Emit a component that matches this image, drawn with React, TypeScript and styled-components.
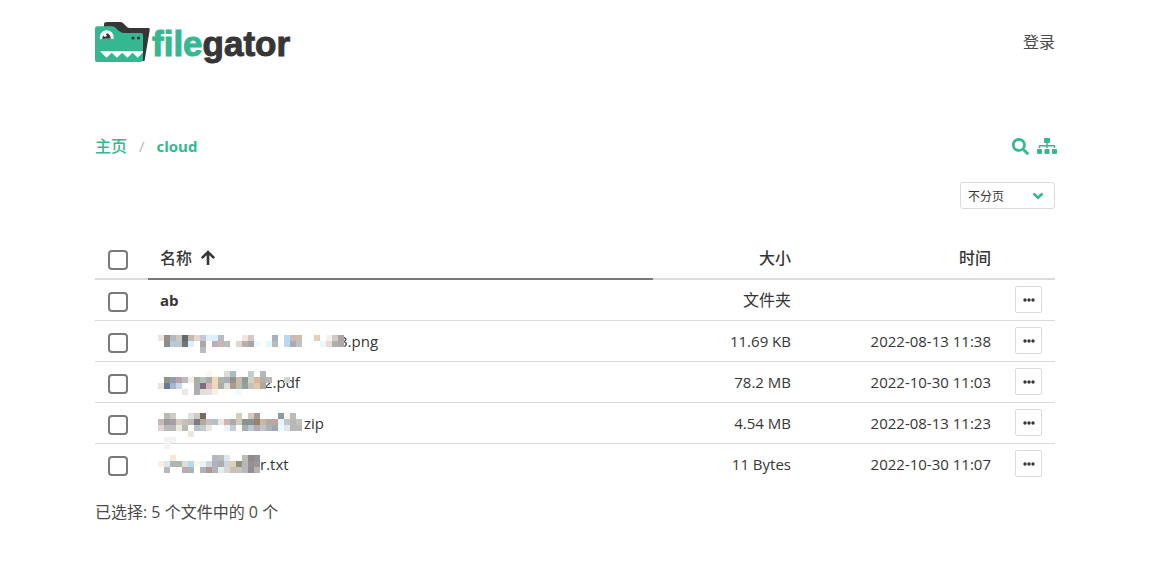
import React from 'react';
import styled, { createGlobalStyle } from 'styled-components';
import { FaSearch, FaSitemap } from 'react-icons/fa';

const GREEN = '#34b891';

const GlobalStyle = createGlobalStyle`
  *, *::before, *::after { box-sizing: border-box; }
  body {
    margin: 0;
    padding-right: 1px;
    background: #fff;
    color: #4a4a4a;
    font-family: 'Open Sans', 'Noto Sans CJK SC', sans-serif;
    font-size: 16px;
    line-height: 24px;
  }
  a { color: inherit; text-decoration: none; }
`;

const Container = styled.div`
  max-width: 960px;
  margin: 0 auto;
  padding-bottom: 64px;
`;

const Navbar = styled.nav`
  display: flex;
  align-items: center;
  justify-content: space-between;
  padding-top: 20px;
`;

const LogoLink = styled.a`
  display: flex;
  height: 44px;
`;

const Toolbar = styled.div`
  display: flex;
  align-items: center;
  justify-content: space-between;
  margin-top: 70px;
  color: ${GREEN};
`;

const Breadcrumb = styled.ol`
  display: flex;
  margin: 0;
  padding: 0;
  list-style: none;
`;

const Crumb = styled.li<{ $latin?: boolean }>`
  font-size: ${(p) => (p.$latin ? 15 : 16)}px;
  font-weight: ${(p) => (p.$latin ? 700 : 500)};
  &:not(:first-child)::before {
    content: '/';
    padding: 0 12px;
    color: #b5b5b5;
    font-weight: 400;
  }
`;

const Actions = styled.div`
  display: flex;
  align-items: center;
  gap: 8px;
  margin-right: -2px;
`;

const IconButton = styled.button`
  display: flex;
  padding: 0;
  border: 0;
  background: none;
  color: inherit;
  cursor: pointer;
`;

const PaginationBar = styled.div`
  display: flex;
  justify-content: flex-end;
  margin-top: 24px;
`;

const SelectWrap = styled.label`
  display: grid;
  align-items: center;
  > * { grid-area: 1 / 1; }
  svg {
    justify-self: end;
    margin-right: 11px;
    pointer-events: none;
  }
`;

const Select = styled.select`
  appearance: none;
  width: 95px;
  height: 27px;
  padding: 1px 24px 0 7px;
  border: 1px solid #dbdbdb;
  border-radius: 3px;
  background: #fff;
  color: #363636;
  font: 12px 'Open Sans', 'Noto Sans CJK SC', sans-serif;
`;

const Table = styled.table`
  width: 100%;
  margin-top: 29px;
  border-collapse: separate;
  border-spacing: 0;
  table-layout: fixed;
  color: #363636;
`;

const Col = styled.col<{ $w?: number }>`
  width: ${(p) => (p.$w ? `${p.$w}px` : 'auto')};
`;

const Th = styled.th<{ $sorted?: boolean; $right?: boolean }>`
  height: 42px;
  padding: 0 12px;
  border-bottom: 2px solid ${(p) => (p.$sorted ? '#7a7a7a' : '#dbdbdb')};
  text-align: ${(p) => (p.$right ? 'right' : 'left')};
  font-weight: 500;
  vertical-align: middle;
`;

const SortLabel = styled.span`
  display: flex;
  align-items: center;
  gap: 8px;
`;

const Td = styled.td<{ $right?: boolean; $cjk?: boolean }>`
  height: 41px;
  padding: 0 12px;
  border-bottom: 1px solid #dbdbdb;
  text-align: ${(p) => (p.$right ? 'right' : 'left')};
  font-size: ${(p) => (p.$cjk ? 16 : 15)}px;
  white-space: nowrap;
  vertical-align: middle;
  tr:last-child > & { border-bottom-color: transparent; }
`;

const CheckTd = styled(Td)`
  padding-left: 13px;
`;

const ActionTd = styled(Td)`
  padding-top: 6px;
  vertical-align: top;
`;

const CheckTh = styled(Th)`
  padding-left: 13px;
`;

const Checkbox = styled.input`
  appearance: none;
  display: block;
  width: 20px;
  height: 20px;
  margin: 4px 0 0;
  border: 2px solid #7a7a7a;
  border-radius: 4px;
  background: #fff;
  &:checked { background: ${GREEN}; border-color: ${GREEN}; }
`;

const MoreButton = styled.button`
  display: flex;
  align-items: center;
  justify-content: center;
  width: 27px;
  height: 27px;
  padding: 0;
  border: 1px solid #dbdbdb;
  border-radius: 2px;
  background: #fff;
  cursor: pointer;
`;

const FileLink = styled.a<{ $folder?: boolean }>`
  display: flex;
  align-items: center;
  font-weight: ${(p) => (p.$folder ? 700 : 400)};
`;

const MosaicSvg = styled.svg`
  flex: none;
  position: relative;
  z-index: 1;
  height: 24px;
  margin-left: -2px;
  overflow: visible;
`;

const Summary = styled.p`
  margin: 15px 0 0;
`;

type Cells = Record<number, string>;

interface Entry {
  name: string;
  size: string;
  time?: string;
  folder?: boolean;
  offset?: number;
  top?: number;
  mosaic?: Cells[];
}

/* Each mosaic row maps a column index to the colour of one 6px block. */
const entries: Entry[] = [
  { name: 'ab', size: '文件夹', folder: true },
  {
    name: '3.png',
    size: '11.69 KB',
    time: '2022-08-13 11:38',
    offset: 181,
    top: 6,
    mosaic: [
      { 0: '#f0e5de', 1: '#929087', 2: '#afbebc', 3: '#d0c8c0', 4: '#616a73', 5: '#c5baac', 6: '#e2d7d1', 7: '#c3c9dc', 8: '#e2f1f9', 9: '#daefff', 10: '#b9bdbd', 14: '#f2e6df', 15: '#d2c9c5', 19: '#a9b0c1', 21: '#b9d9f0', 22: '#c8bab3', 23: '#d0bda9', 26: '#e5cfb6', 28: '#f5f1ef', 29: '#d1c9c5', 30: '#aaa5a1' },
      { 1: '#8b8b8c', 2: '#b7c8d8', 3: '#b8c8d9', 4: '#747474', 5: '#dbefff', 7: '#a9aaa6', 9: '#b9b0ba', 10: '#c8b6af', 11: '#b8bcbc', 13: '#e0d7cb', 14: '#b9b0ac', 15: '#a6a3a9', 16: '#f0f8ff', 18: '#e4f6ff', 19: '#b9baba', 21: '#b9d9f0', 22: '#a9adb1', 23: '#bdc1c8', 27: '#edf6fc', 28: '#e7dbd6', 29: '#b4adad', 30: '#afa8aa' },
      { 7: '#bcbcbc' },
    ],
  },
  {
    name: '2.pdf',
    size: '78.2 MB',
    time: '2022-10-30 11:03',
    offset: 106,
    top: 1,
    mosaic: [
      { 8: '#fff6ef', 11: '#e0dcd4', 12: '#a4bdcb', 15: '#c2cdd0', 17: '#b0b9bc' },
      { 1: '#929486', 2: '#969caf', 3: '#b9a1ad', 4: '#b9bdbd', 5: '#f5ede0', 6: '#a5ada7', 7: '#b9beb6', 8: '#a8acab', 9: '#f0d8b8', 10: '#afb3a9', 11: '#a7b0ba', 12: '#989087', 13: '#c6b9b2', 14: '#929994', 15: '#d0d3ca', 16: '#d7b69c', 17: '#b6b0aa', 18: '#b8b8b8', 21: '#ced8cf' },
      { 0: '#eee4df', 1: '#697a98', 2: '#a9b7c5', 3: '#cbd8e4', 6: '#a6adab', 7: '#7c6d7c', 8: '#d5b7ba', 9: '#efd8b9', 10: '#a8aea9', 11: '#dedbd3', 12: '#a89d95', 13: '#c1bdac', 14: '#91a0a1', 15: '#c5c3b5', 16: '#e0caae', 17: '#aaa7a1' },
      { 4: '#efe5e8', 6: '#acafb2', 7: '#e4dcda', 8: '#e1e1df', 9: '#f8f1e4', 13: '#effcff' },
    ],
  },
  {
    name: 'zip',
    size: '4.54 MB',
    time: '2022-08-13 11:23',
    offset: 146,
    top: 2,
    mosaic: [
      { 1: '#b9bbb7', 2: '#caccc5', 5: '#dae1e9', 6: '#d2cbc3', 7: '#736c65', 13: '#d4cebb', 15: '#d7c7bf', 16: '#a69996', 20: '#899ca6', 21: '#fff4ec', 22: '#b9bbba' },
      { 0: '#c5b8b7', 1: '#9d9a9a', 2: '#a99da7', 3: '#d6cdc8', 4: '#c9bfbb', 5: '#c0b8b4', 6: '#7a7c80', 7: '#b7aa9a', 8: '#c7bcbe', 9: '#b4bfc9', 10: '#ebe6e1', 11: '#cfb5ae', 12: '#a8ada8', 13: '#d1cbb6', 14: '#899191', 15: '#8b9292', 16: '#9b8068', 17: '#c9b7a5', 18: '#b6aaa5', 19: '#bea79d', 20: '#e4f4ff', 21: '#c0c6ca', 22: '#b7b9b7', 23: '#c4c3c0' },
      { 0: '#ded4d2', 1: '#b8babb', 2: '#bbb9bd', 3: '#eee8df', 4: '#b5beb4', 6: '#b5c2c9', 7: '#c3cbcd', 8: '#e9e7e0', 11: '#edf1f2', 12: '#c0cdd5', 14: '#a9adb1', 15: '#bdc9d0', 16: '#b7aab7', 17: '#bec4cb', 18: '#acb2b6', 19: '#9fa6ad', 20: '#edf8fc', 21: '#e2e7eb', 22: '#b7b9b9', 23: '#babab9' },
      { 5: '#efe5df' },
      { 1: '#f3f3f3', 2: '#f3f3f3' },
      { 1: '#f3f3f3' },
    ],
  },
  {
    name: 'r.txt',
    size: '11 Bytes',
    time: '2022-10-30 11:07',
    offset: 102,
    top: 3,
    mosaic: [
      { 2: '#f5e7d3', 9: '#b5b8bc', 10: '#b9bdbb', 11: '#dee7ef', 14: '#b9beb6', 15: '#8f898c', 16: '#969193' },
      { 0: '#fbefdf', 1: '#e0e6f1', 2: '#adb7af', 3: '#adb7af', 4: '#dedfd4', 5: '#b8d8ef', 6: '#fff8e5', 7: '#e1f6ff', 8: '#d1d7d9', 9: '#adb2bc', 10: '#acafb0', 11: '#c9d4dc', 12: '#e4ceb6', 13: '#8f9282', 14: '#b9b8b9', 15: '#969091', 16: '#9d9698' },
      { 1: '#b8b8bd', 4: '#b9aab5', 5: '#adb6b0', 7: '#afb3b7', 8: '#b19793', 9: '#b3b2bb', 10: '#e4efed', 11: '#ded5d0', 12: '#c9bfba', 13: '#cac2bf', 14: '#b8b7bb', 15: '#928c93', 16: '#b6b2b5' },
    ],
  },
];

function Mosaic({ cells, width, top }: { cells: Cells[]; width: number; top: number }) {
  return (
    <MosaicSvg width={width} viewBox={`0 0 ${width} 24`} shapeRendering="crispEdges" aria-hidden="true">
      {cells.flatMap((row, y) =>
        Object.entries(row).map(([x, fill]) => (
          <rect key={`${x}-${y}`} x={Number(x) * 6} y={top + y * 6} width="6" height="6" fill={fill} />
        )),
      )}
    </MosaicSvg>
  );
}

function Logo() {
  return (
    <svg width="198" height="44" viewBox="0 0 198 44" role="img" aria-label="filegator">
      <path d="M9 9V4q0-2 3-2h13q2 0 3 1l4 4q1 1 3 1h18.500q1.500 0 1.300 1.500L49.500 41h-7L9 12Z" fill="#363636" />
      <path d="M2 6.300h15q3 0 5 3l2 1.700q2 2 5 2h17q2 0 2 2v24q0 3-3 3H2q-2 0-2-2V8.300q0-2 2-2Z" fill={GREEN} />
      <path d="M5 19.300C4 14 7.500 10.300 11.500 10.300S19.500 13.500 18.500 19Q12 18 5 19.300Z" fill="#fff" />
      <path d="M7.300 19C7.500 15.500 9 14.500 10.500 14.800L12 13.300C14.500 14 15.700 16 15.700 18.700Q11 18.300 7.300 19Z" fill="#363636" />
      <circle cx="10" cy="15.300" r="1.500" fill="#fff" />
      <circle cx="38" cy="18" r="1.600" fill="#363636" />
      <circle cx="43.500" cy="18" r="1.600" fill="#363636" />
      <path d="M5 31.300H48V32.300L42.700 37.800L37.600 32.800L32.400 37.800L27.200 32.800L22 37.800L16.700 32.800L11.500 37.800Z" fill="#fff" />
      <text
        x="57"
        y="36"
        fontFamily="'Liberation Sans', Arial, sans-serif"
        fontWeight="700"
        fontSize="35"
        strokeWidth="1"
      >
        <tspan fill={GREEN} stroke={GREEN}>file</tspan>
        <tspan fill="#363636" stroke="#363636">gator</tspan>
      </text>
    </svg>
  );
}

function ArrowUp() {
  return (
    <svg width="16" height="16" viewBox="0 0 16 16" fill="none" stroke="#363636" strokeWidth="2.600" aria-hidden="true">
      <path d="M8 15V2.500M1.800 8.200 8 2l6.200 6.200" />
    </svg>
  );
}

function Dots() {
  return (
    <svg width="12" height="4" viewBox="0 0 12 4" fill="#363636" aria-hidden="true">
      <circle cx="2" cy="2" r="1.700" />
      <circle cx="6" cy="2" r="1.700" />
      <circle cx="10" cy="2" r="1.700" />
    </svg>
  );
}

export default function App() {
  return (
    <Container lang="zh-CN">
      <GlobalStyle />
      <Navbar>
        <LogoLink href="#"><Logo /></LogoLink>
        <a href="#login">登录</a>
      </Navbar>

      <Toolbar>
        <Breadcrumb>
          <Crumb><a href="#">主页</a></Crumb>
          <Crumb $latin><a href="#cloud">cloud</a></Crumb>
        </Breadcrumb>
        <Actions>
          <IconButton type="button" aria-label="搜索"><FaSearch size={17} /></IconButton>
          <IconButton type="button" aria-label="目录树"><FaSitemap size={20} /></IconButton>
        </Actions>
      </Toolbar>

      <PaginationBar>
        <SelectWrap>
          <Select aria-label="分页" defaultValue="all">
            <option value="all">不分页</option>
            <option value="10">10</option>
          </Select>
          <svg width="12" height="8" viewBox="0 0 12 8" fill="none" stroke={GREEN} strokeWidth="2.500" aria-hidden="true">
            <path d="m1.500 1.500 4.500 4.200 4.500-4.200" />
          </svg>
        </SelectWrap>
      </PaginationBar>

      <Table>
        <colgroup>
          <Col $w={53} />
          <Col />
          <Col $w={150} />
          <Col $w={200} />
          <Col $w={52} />
        </colgroup>
        <thead>
          <tr>
            <CheckTh><Checkbox type="checkbox" aria-label="全选" /></CheckTh>
            <Th $sorted><SortLabel>名称 <ArrowUp /></SortLabel></Th>
            <Th $right>大小</Th>
            <Th $right>时间</Th>
            <Th />
          </tr>
        </thead>
        <tbody>
          {entries.map((e) => (
            <tr key={e.name}>
              <CheckTd><Checkbox type="checkbox" aria-label={e.name} /></CheckTd>
              <Td>
                <FileLink href={`#${e.name}`} $folder={e.folder}>
                  {e.mosaic && <Mosaic cells={e.mosaic} width={e.offset ?? 0} top={e.top ?? 0} />}
                  {e.name}
                </FileLink>
              </Td>
              <Td $right $cjk={e.folder}>{e.size}</Td>
              <Td $right>{e.time}</Td>
              <ActionTd>
                <MoreButton type="button" aria-label="更多"><Dots /></MoreButton>
              </ActionTd>
            </tr>
          ))}
        </tbody>
      </Table>

      <Summary>已选择: 5 个文件中的 0 个</Summary>
    </Container>
  );
}
